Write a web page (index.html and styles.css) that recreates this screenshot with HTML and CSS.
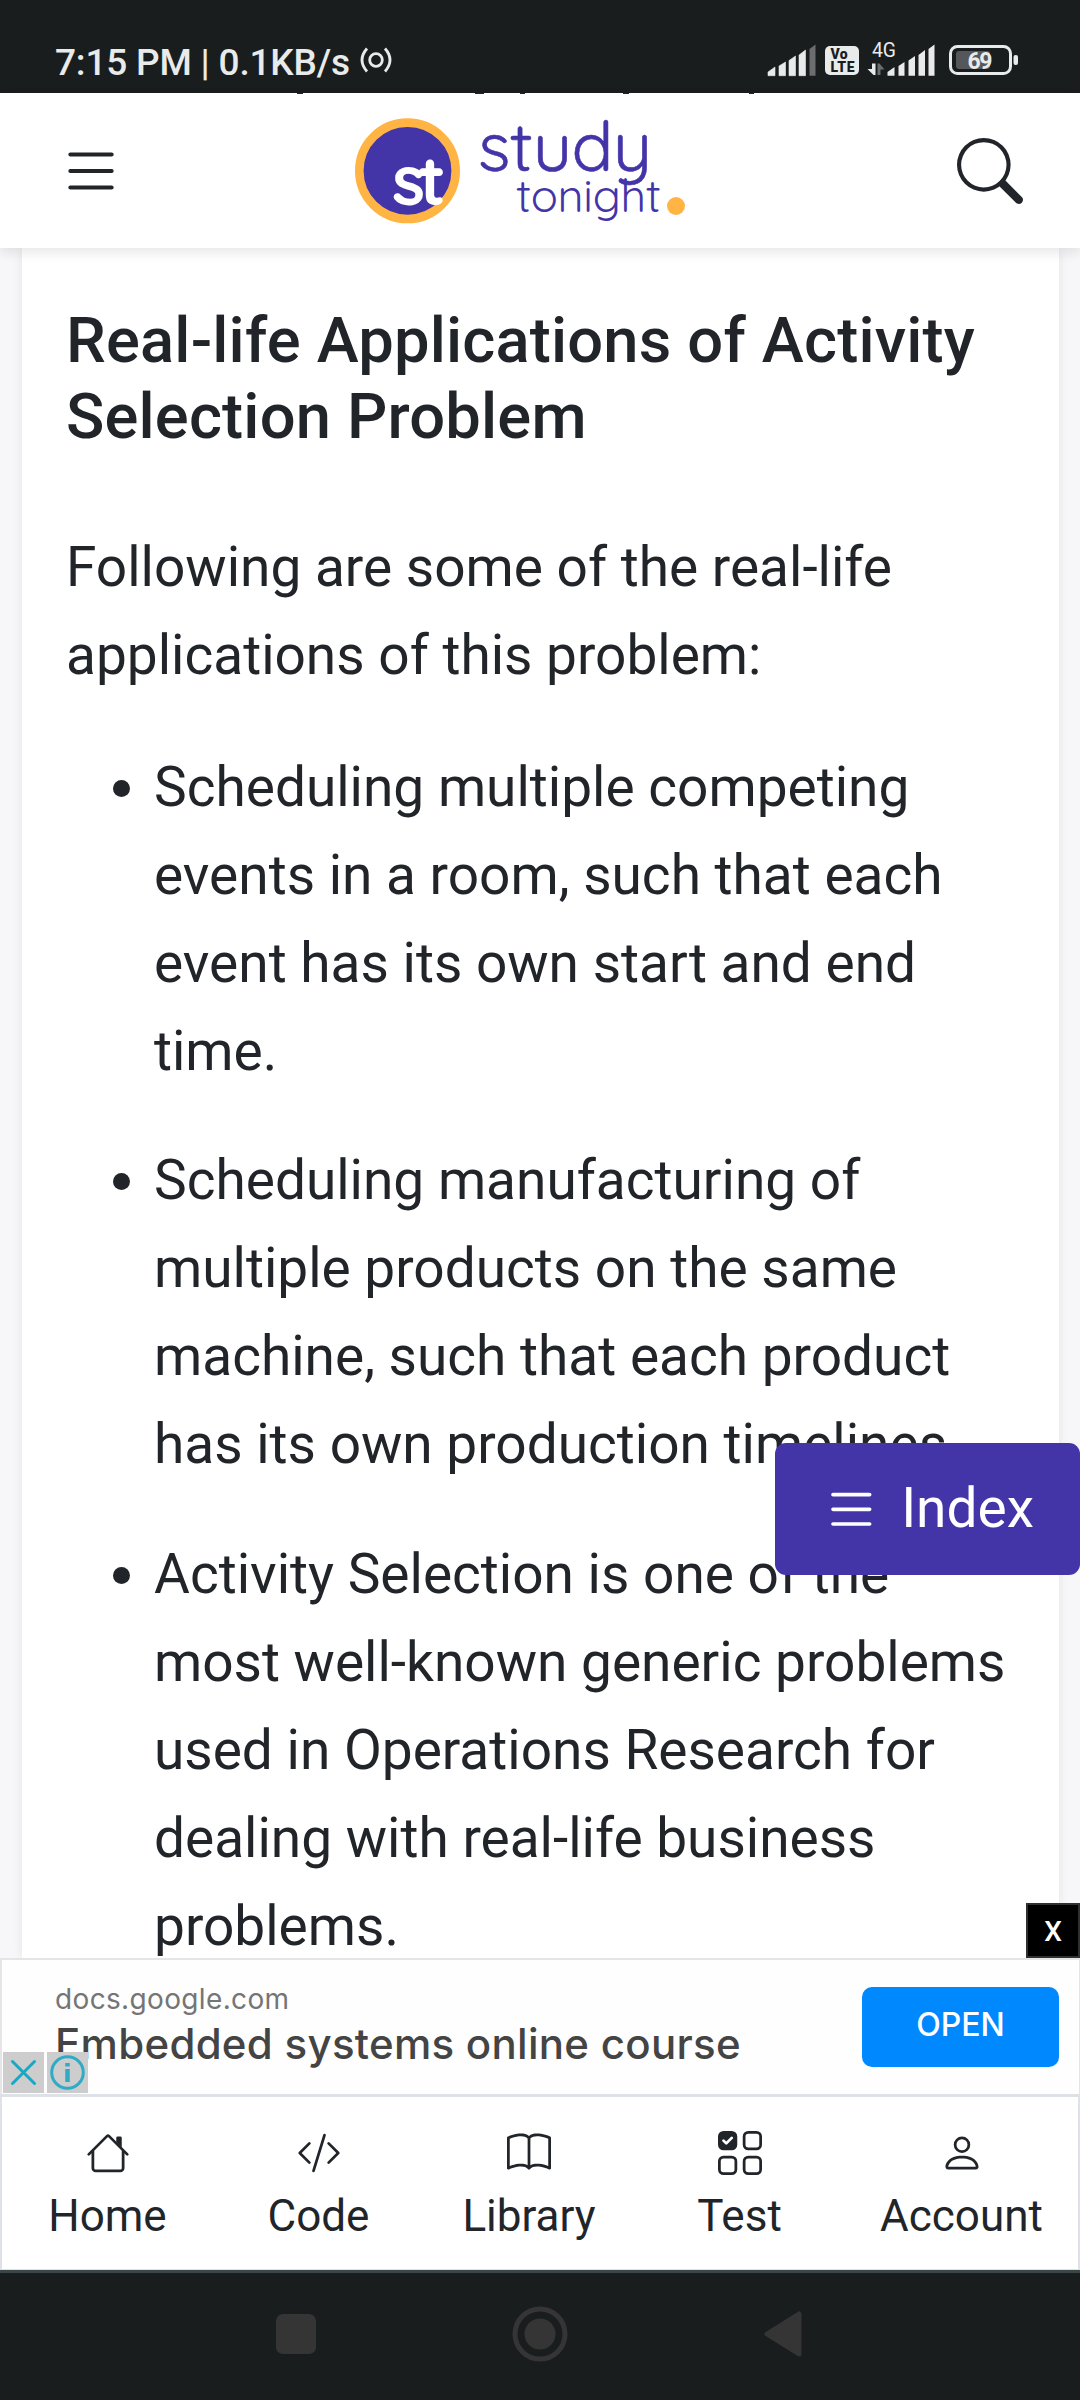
FILE: index.html
```html
<!DOCTYPE html>
<html lang="en">
<head>
<meta charset="utf-8">
<title>Activity Selection Problem | Studytonight</title>
<link rel="stylesheet" href="styles.css">
</head>
<body>
<div class="status-bar">
  <span class="status-text">7:15 PM | 0.1KB/s</span>
  <svg class="hotspot" width="32" height="28" viewBox="0 0 32 28" fill="none" stroke="#e9eaea" stroke-width="2.8"><circle cx="16" cy="14" r="6.3"/><path d="M7 2.5Q-3 14 7 25.5M25 2.5Q35 14 25 25.5"/></svg>
  <svg class="status-icons" width="254" height="40" viewBox="766 40 254 40" fill="#e9eaea">
    <path d="M768 75.700V72l7-5v8.700zM779 75.700V66l6.500-4v13.700zM789 75.700V60.500l6.500-4.500v19.700zM799 75.700V55l6.500-5v25.700z" stroke="#e9eaea" stroke-width=".6" stroke-linejoin="round"/>
    <path d="M809.500 75.700V49l6-4.500v31.200z" fill="#6b6d6e"/>
    <rect x="825" y="46" width="34" height="29" rx="5"/>
    <g fill="#191d1e" class="volte"><text x="830.500" y="58.500" textLength="17">Vo</text><text x="830.500" y="71.500" textLength="24">LTE</text></g>
    <text class="net" x="872" y="57" textLength="24" lengthAdjust="spacingAndGlyphs">4G</text>
    <path d="M875.500 63.500v11.500h-2l-6-6h4.500v-5.500z"/><path fill="#6b6d6e" d="M877.500 75V63.500h2l5 6h-4V75z"/>
    <path d="M887.500 75.700V72l7-5v8.700zM898.500 75.700V66l6-4v13.700zM908.500 75.700V60.500l6.500-4.500v19.700zM918.500 75.700V55l6.500-5v25.700zM928.500 75.700V49l6-4.500v31.200z"/>
    <rect x="950.500" y="46.500" width="60" height="27" rx="7" fill="none" stroke="#e9eaea" stroke-width="3"/>
    <rect x="956" y="51" width="34" height="18" rx="3" fill="#55575a"/>
    <rect x="1013.500" y="55" width="4.500" height="10" rx="2"/>
    <text class="battery" x="967.500" y="69" textLength="25">69</text>
  </svg>
</div>

<header class="site-header">
  <svg class="scrolled-line" width="460" height="1" fill="#212529"><path d="M1 0h6v1H1zM179 0h9v1h-9zM224 0h5v1h-5zM327 0h6v1h-6zM453 0h5v1h-5z"/></svg>
  <svg class="icon-lg" viewBox="0 0 16 16"><path d="M2.500 12a.5.5 0 0 1 .5-.5h10a.5.5 0 0 1 0 1H3a.5.5 0 0 1-.5-.5zm0-4a.5.5 0 0 1 .5-.5h10a.5.5 0 0 1 0 1H3a.5.5 0 0 1-.5-.5zm0-4a.5.5 0 0 1 .5-.5h10a.5.5 0 0 1 0 1H3a.5.5 0 0 1-.5-.5z"/></svg>
  <svg class="logo" width="340" height="130" viewBox="350 105 340 130">
    <circle cx="407.500" cy="170.800" r="48.200" fill="#4334a8" stroke="#ffb443" stroke-width="8.600"/>
    <text class="logo-st" x="392" y="205" textLength="54">st</text>
    <text class="logo-study" x="478" y="171" textLength="174">study</text>
    <text class="logo-tonight" x="516" y="212" textLength="145">tonight</text>
    <circle cx="676" cy="206" r="9" fill="#ffb443"/>
  </svg>
  <svg class="icon-lg" viewBox="0 0 16 16"><path d="M10.442 10.442a1 1 0 0 1 1.415 0l3.850 3.850a1 1 0 0 1-1.414 1.415l-3.850-3.850a1 1 0 0 1 0-1.415z"/><path d="M6.500 12a5.500 5.500 0 1 0 0-11 5.500 5.500 0 0 0 0 11zM13 6.500a6.500 6.500 0 1 1-13 0 6.500 6.500 0 0 1 13 0z"/></svg>
</header>

<main class="page">
  <article class="card">
    <h2>Real-life Applications of Activity Selection Problem</h2>
    <p>Following are some of the real-life applications of this problem:</p>
    <ul>
      <li>Scheduling multiple competing events in a room, such that each event has its own start and end time.</li>
      <li>Scheduling manufacturing of multiple products on the same machine, such that each product has its own production timelines.</li>
      <li>Activity Selection is one of the most well-known generic problems used in Operations Research for dealing with real-life business problems.</li>
    </ul>
  </article>
  <a class="index-button"><svg viewBox="0 0 16 16"><path d="M2.500 12a.5.5 0 0 1 .5-.5h10a.5.5 0 0 1 0 1H3a.5.5 0 0 1-.5-.5zm0-4a.5.5 0 0 1 .5-.5h10a.5.5 0 0 1 0 1H3a.5.5 0 0 1-.5-.5zm0-4a.5.5 0 0 1 .5-.5h10a.5.5 0 0 1 0 1H3a.5.5 0 0 1-.5-.5z"/></svg><span>Index</span></a>
  <span class="close-ad">X</span>
</main>

<aside class="ad">
  <div class="ad-copy">
    <div class="ad-domain">docs.google.com</div>
    <div class="ad-title">Embedded systems online course</div>
  </div>
  <a class="ad-open">OPEN</a>
  <div class="ad-choices">
    <svg width="41" height="41" viewBox="0 0 41 41" fill="none" stroke="#17a8c6" stroke-width="3" stroke-linecap="round"><path d="M9.500 9.500l22 22M31.500 9.500l-22 22"/></svg>
    <svg width="41" height="41" viewBox="0 0 41 41" fill="none" stroke="#2fabc8" stroke-width="3"><circle cx="20.500" cy="20.500" r="15.800"/><path d="M20.500 11v3.500M20.500 17v13" stroke-width="4.500"/></svg>
  </div>
</aside>

<nav class="tabs">
  <a><svg viewBox="0 0 16 16"><path d="M2 13.500V7h1v6.500a.5.5 0 0 0 .5.5h9a.5.5 0 0 0 .5-.5V7h1v6.500a1.500 1.500 0 0 1-1.500 1.500h-9A1.500 1.500 0 0 1 2 13.500zm11-11V6l-2-2V2.500a.5.5 0 0 1 .5-.5h1a.5.5 0 0 1 .5.5z"/><path d="M7.293 1.500a1 1 0 0 1 1.414 0l6.647 6.646a.5.5 0 0 1-.708.708L8 2.207 1.354 8.854a.5.5 0 1 1-.708-.708L7.293 1.500z"/></svg><span>Home</span></a>
  <a><svg viewBox="0 0 16 16"><path d="M10.478 1.647a.5.5 0 1 0-.956-.294l-4 13a.5.5 0 0 0 .956.294l4-13zM4.854 4.146a.5.5 0 0 1 0 .708L1.707 8l3.147 3.146a.5.5 0 0 1-.708.708l-3.500-3.500a.5.5 0 0 1 0-.708l3.500-3.500a.5.5 0 0 1 .708 0zm6.292 0a.5.5 0 0 0 0 .708L14.293 8l-3.147 3.146a.5.5 0 0 0 .708.708l3.500-3.500a.5.5 0 0 0 0-.708l-3.500-3.500a.5.5 0 0 0-.708 0z"/></svg><span>Code</span></a>
  <a><svg viewBox="0 0 16 16"><path d="M1 2.828c.885-.37 2.154-.769 3.388-.893 1.330-.134 2.458.063 3.112.752v9.746c-.935-.53-2.120-.603-3.213-.493-1.180.12-2.370.461-3.287.811V2.828zm7.500-.141c.654-.689 1.782-.886 3.112-.752 1.234.124 2.503.523 3.388.893v9.923c-.918-.35-2.107-.692-3.287-.81-1.094-.111-2.278-.039-3.213.492V2.687zM8 1.783C7.015.936 5.587.81 4.287.94c-1.514.153-3.042.672-3.994 1.105A.5.5 0 0 0 0 2.500v11a.5.5 0 0 0 .707.455c.882-.4 2.303-.881 3.680-1.020 1.409-.142 2.590.087 3.223.877a.5.5 0 0 0 .78 0c.633-.79 1.814-1.019 3.222-.877 1.378.139 2.800.62 3.681 1.020A.5.5 0 0 0 16 13.500v-11a.5.5 0 0 0-.293-.455c-.952-.433-2.480-.952-3.994-1.105C10.413.809 8.985.936 8 1.783z"/></svg><span>Library</span></a>
  <a><svg viewBox="0 0 16 16"><path fill-rule="evenodd" d="M0 2a2 2 0 0 1 2-2h3a2 2 0 0 1 2 2v3a2 2 0 0 1-2 2H2a2 2 0 0 1-2-2V2zm5.354.854a.5.5 0 1 0-.708-.708L3 3.793l-.646-.647a.5.5 0 1 0-.708.708l1 1a.5.5 0 0 0 .708 0l2-2z"/><g fill="none" stroke="#212529"><rect x="9.500" y=".5" width="6" height="6" rx="1.500"/><rect x=".5" y="9.500" width="6" height="6" rx="1.500"/><rect x="9.500" y="9.500" width="6" height="6" rx="1.500"/></g></svg><span>Test</span></a>
  <a><svg viewBox="0 0 16 16"><path d="M8 8a3 3 0 1 0 0-6 3 3 0 0 0 0 6zm2-3a2 2 0 1 1-4 0 2 2 0 0 1 4 0zm4 8c0 1-1 1-1 1H3s-1 0-1-1 1-4 6-4 6 3 6 4zm-1-.004c-.001-.246-.154-.986-.832-1.664C11.516 10.680 10.289 10 8 10c-2.290 0-3.516.68-4.168 1.332-.678.678-.83 1.418-.832 1.664h10z"/></svg><span>Account</span></a>
</nav>

<div class="system-nav">
  <svg width="40" height="40"><rect width="40" height="40" rx="7"/></svg>
  <svg width="56" height="56"><circle cx="28" cy="28" r="25" fill="none" stroke="#353535" stroke-width="5"/><circle cx="28" cy="28" r="15.500"/></svg>
  <svg width="38" height="46"><path d="M3 23L35 3v40z" stroke="#353535" stroke-width="5" stroke-linejoin="round"/></svg>
</div>
</body>
</html>
```
FILE: styles.css
```css
* { box-sizing: border-box; }

body {
  margin: 0;
  width: 1080px;
  height: 2400px;
  overflow: hidden;
  display: flex;
  flex-direction: column;
  background: #f7f7fa;
  color: #212529;
  font-family: Roboto, sans-serif;
}

svg { display: block; flex: none; overflow: visible; }

/* Phone status bar */
.status-bar {
  flex: none;
  height: 93px;
  display: flex;
  align-items: flex-start;
  padding: 40px 60px 0 55px;
  background: #191d1e;
  color: #e9eaea;
}
.status-text {
  width: 296px;
  margin-top: 2px;
  font-size: 37px;
  font-weight: 500;
  letter-spacing: -.2px;
  line-height: 42px;
  white-space: nowrap;
}
.hotspot { margin: 6px 0 0 9px; }
.status-icons { margin-left: auto; }
.volte { font-size: 14px; font-weight: 900; }
.net { font-size: 20px; }
.battery { font-size: 23px; font-weight: 700; }

/* Site header */
.site-header {
  position: relative;
  z-index: 2;
  flex: none;
  height: 155px;
  display: flex;
  align-items: center;
  justify-content: space-between;
  padding: 0 57px 0 58px;
  background: #fff;
  box-shadow: 0 5px 11px rgba(0, 0, 0, .09);
}
.scrolled-line { position: absolute; top: 0; left: 296px; }
.icon-lg { width: 66px; height: 66px; fill: #212529; }
.logo { margin-right: 41px; margin-top: -1px; font-family: Quicksand, Lato, sans-serif; }
.logo text { stroke-linejoin: round; }
.logo-st { font-size: 69px; font-weight: 700; fill: #fff; }
.logo-study { font-size: 69px; fill: #4334a8; stroke: #4334a8; stroke-width: .6px; }
.logo-tonight { font-size: 45px; fill: #4334a8; }

/* Article */
.page {
  position: relative;
  flex: none;
  height: 1710px;
  padding: 0 21px 0 22px;
}
.card {
  height: 1710px;
  overflow: hidden;
  padding: 55px 44px 0;
  background: #fff;
  box-shadow: 0 0 10px rgba(0, 0, 0, .08);
}
h2 {
  margin: 0 0 67.75px;
  font-size: 63.25px;
  font-weight: 500;
  letter-spacing: .18px;
  line-height: 75.9px;
}
p, ul { margin: 0 0 44px; font-size: 55px; line-height: 88px; }
ul { padding-left: 88px; }
li { margin-bottom: 41.6px; }

.index-button {
  position: absolute;
  right: 0;
  top: 1195px;
  width: 305px;
  height: 132px;
  display: flex;
  align-items: center;
  padding-left: 47px;
  border-radius: 11px;
  background: #4334a8;
  color: #fff;
  font-size: 55px;
}
.index-button svg { width: 58.67px; height: 58.67px; fill: #fff; }
.index-button span { margin: -2px 0 0 20.5px; }

.close-ad {
  position: absolute;
  right: 0;
  bottom: 0;
  width: 54px;
  height: 55px;
  border: 2px solid #303030;
  background: #000;
  color: #fff;
  font-size: 28px;
  font-weight: 500;
  line-height: 53px;
  text-align: center;
}

/* Banner ad */
.ad {
  position: relative;
  flex: none;
  height: 136px;
  display: flex;
  align-items: flex-start;
  justify-content: space-between;
  padding: 27px 20px 0 53px;
  border: solid #e5e5e7;
  border-width: 2px 1px 0 2px;
  background: #fefefe;
  font-family: "Google Sans", Inter, sans-serif;
}
.ad-domain {
  margin-top: -6px;
  font-size: 28px;
  letter-spacing: .35px;
  line-height: 36px;
  color: #757575;
}
.ad-title {
  margin-top: 2px;
  font-size: 42px;
  font-weight: 500;
  letter-spacing: .28px;
  line-height: 50px;
  color: #444;
  white-space: nowrap;
}
.ad-open {
  width: 197px;
  height: 80px;
  border-radius: 10px;
  background: #08f;
  color: #fff;
  font-size: 32px;
  font-weight: 500;
  line-height: 76px;
  text-align: center;
}
.ad-choices { position: absolute; left: 1px; bottom: 1px; display: flex; gap: 3px; }
.ad-choices svg { background: #cdcdcd; }

/* Bottom tab bar */
.tabs {
  flex: none;
  height: 176px;
  display: grid;
  grid-template-columns: 211px 211px 210px 211px 1fr;
  border: solid #dee2e6;
  border-width: 3px 2px 1px;
  background: #fff;
}
.tabs a {
  display: flex;
  flex-direction: column;
  align-items: center;
  padding-top: 34px;
  font-size: 44px;
  line-height: 52px;
}
.tabs svg { width: 44px; height: 44px; fill: #212529; }
.tabs span { margin-top: 15px; }

/* Android navigation */
.system-nav {
  flex: none;
  height: 130px;
  display: flex;
  align-items: center;
  justify-content: space-between;
  padding: 0 278px 5px 276px;
  border-top: 3px solid #3b4649;
  background: #191d1e;
}
.system-nav svg { fill: #353535; }
```
